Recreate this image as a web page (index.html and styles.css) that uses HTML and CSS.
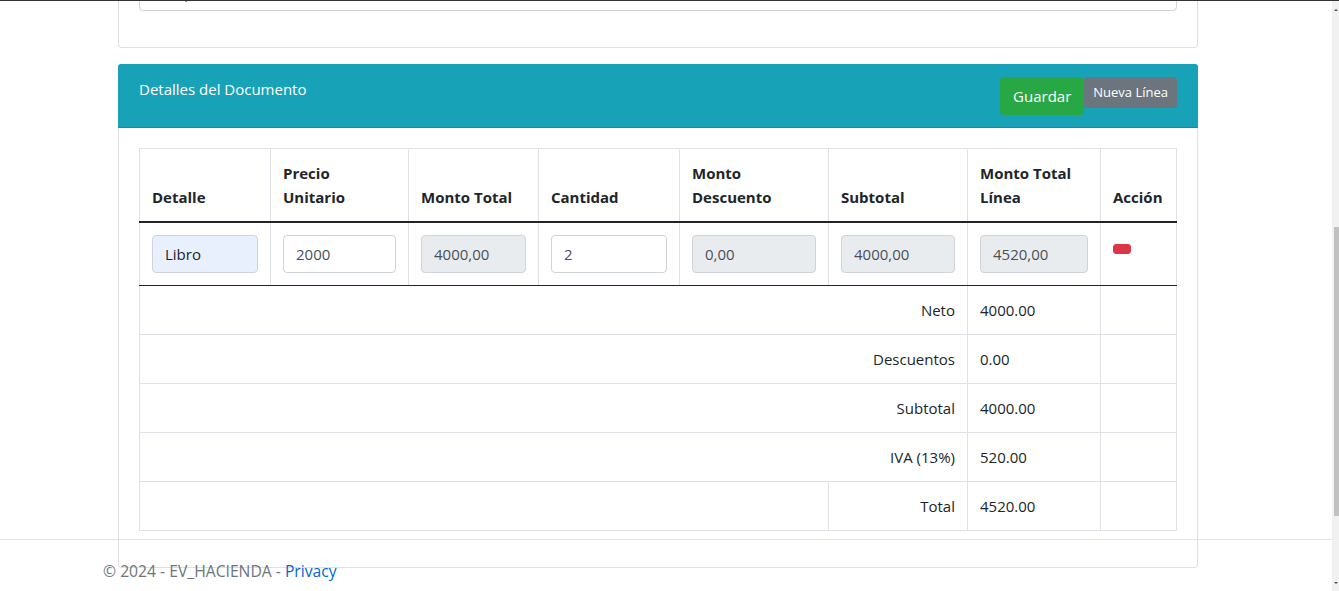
FILE: index.html
```html
<!DOCTYPE html>
<html lang="es">
<head>
<meta charset="utf-8">
<title>Detalles del Documento</title>
<link rel="stylesheet" href="styles.css">
</head>
<body>
<div class="topline"></div>
<main class="page">
  <section class="card card-first">
    <div class="card-body">
      <input class="form-control" type="text" value="Compra de libros">
    </div>
  </section>

  <section class="card card-detail">
    <header class="card-header">
      <span class="card-title">Detalles del Documento</span>
      <div class="btn-group"><button class="btn btn-success" type="button">Guardar</button><button class="btn btn-secondary btn-sm" type="button">Nueva Línea</button></div>
    </header>
    <div class="card-body">
      <table class="table">
        <colgroup>
          <col class="c-detalle">
          <col class="c-precio">
          <col class="c-monto">
          <col class="c-cant">
          <col class="c-desc">
          <col class="c-sub">
          <col class="c-linea">
          <col class="c-accion">
        </colgroup>
        <thead>
          <tr>
            <th>Detalle</th>
            <th>Precio<br>Unitario</th>
            <th>Monto Total</th>
            <th>Cantidad</th>
            <th>Monto<br>Descuento</th>
            <th>Subtotal</th>
            <th>Monto Total<br>Línea</th>
            <th>Acción</th>
          </tr>
        </thead>
        <tbody>
          <tr class="line-row">
            <td><input class="form-control autofill" type="text" value="Libro"></td>
            <td><input class="form-control" type="text" value="2000"></td>
            <td><input class="form-control" type="text" value="4000,00" readonly></td>
            <td><input class="form-control" type="text" value="2"></td>
            <td><input class="form-control" type="text" value="0,00" readonly></td>
            <td><input class="form-control" type="text" value="4000,00" readonly></td>
            <td><input class="form-control" type="text" value="4520,00" readonly></td>
            <td><button class="btn-delete" type="button" aria-label="Eliminar línea"></button></td>
          </tr>
        </tbody>
        <tfoot>
          <tr>
            <td colspan="6" class="label">Neto</td>
            <td>4000.00</td>
            <td></td>
          </tr>
          <tr>
            <td colspan="6" class="label">Descuentos</td>
            <td>0.00</td>
            <td></td>
          </tr>
          <tr>
            <td colspan="6" class="label">Subtotal</td>
            <td>4000.00</td>
            <td></td>
          </tr>
          <tr>
            <td colspan="6" class="label">IVA (13%)</td>
            <td>520.00</td>
            <td></td>
          </tr>
          <tr>
            <td colspan="5"></td>
            <td class="label">Total</td>
            <td>4520.00</td>
            <td></td>
          </tr>
        </tfoot>
      </table>
    </div>
  </section>
</main>

<footer class="footer">
  <div class="footer-inner">© 2024 - EV_HACIENDA - <a href="#" class="footer-link">Privacy</a></div>
</footer>

<div class="scrollbar" aria-hidden="true">
  <div class="scroll-up"></div>
  <div class="scroll-thumb"></div>
  <div class="scroll-down"></div>
</div>
</body>
</html>
```

FILE: styles.css
```css
* {
  box-sizing: border-box;
}

html,
body {
  margin: 0;
  padding: 0;
  height: 100%;
  overflow: hidden;
  background: #fff;
}

body {
  font-family: "Open Sans", "Noto Sans", "DejaVu Sans", sans-serif;
  font-size: 15px;
  line-height: 24px;
  color: #212529;
  position: relative;
}

.topline {
  position: fixed;
  top: 0;
  left: 0;
  right: 0;
  height: 1px;
  background: #333;
  z-index: 10;
}

.page {
  width: 1080px;
  margin-left: 118px;
}

.card {
  border: 1px solid rgba(0, 0, 0, 0.125);
  border-radius: 4px;
  background: #fff;
}

.card-first {
  margin-top: -48px;
}

.card-detail {
  margin-top: 16px;
}

.card-body {
  padding: 20px;
}

.card-first .form-control {
  margin-bottom: 16px;
}

.card-header {
  display: flex;
  justify-content: space-between;
  align-items: flex-start;
  padding: 12px 20px;
  background: #17a2b8;
  border-bottom: 1px solid rgba(0, 0, 0, 0.125);
  border-radius: 3px 3px 0 0;
  margin: -1px -1px 0;
  border-top: 1px solid #17a2b8;
  border-left: 1px solid #17a2b8;
  border-right: 1px solid #17a2b8;
  color: #fff;
}

.card-title {
  display: block;
  line-height: 24px;
}

.btn-group {
  display: flex;
  align-items: flex-start;
}

.btn {
  font-family: inherit;
  border: 1px solid transparent;
  color: #fff;
  border-radius: 4px;
  cursor: pointer;
}

.btn-success {
  background: #28a745;
  border-color: #28a745;
  font-size: 15px;
  line-height: 24px;
  padding: 6px 12px;
  height: 38px;
}

.btn-secondary {
  background: #6c757d;
  border-color: #6c757d;
}

.btn-sm {
  font-size: 13px;
  line-height: 21px;
  padding: 4px 8px;
  height: 31px;
  border-radius: 3px;
}

.form-control {
  display: block;
  width: 100%;
  height: 38px;
  padding: 6px 12px;
  font-family: inherit;
  font-size: 15px;
  line-height: 24px;
  color: #495057;
  background: #fff;
  border: 1px solid #ced4da;
  border-radius: 4px;
}

.form-control[readonly] {
  background: #e9ecef;
}

.form-control.autofill {
  background: #e8f0fe;
  color: #212529;
}

.table {
  width: 1037px;
  table-layout: fixed;
  border-collapse: collapse;
  margin-bottom: 16px;
  color: #212529;
}

.c-detalle { width: 131px; }
.c-precio { width: 138px; }
.c-monto { width: 130px; }
.c-cant { width: 141px; }
.c-desc { width: 149px; }
.c-sub { width: 139px; }
.c-linea { width: 133px; }
.c-accion { width: 76px; }

.table th,
.table td {
  border: 1px solid #dee2e6;
  padding: 12px;
  line-height: 24px;
  text-align: left;
}

.table th {
  font-weight: 700;
  vertical-align: bottom;
}

.table thead th {
  border-bottom: 2px solid #212529;
}

.table tbody td {
  vertical-align: top;
}

.table .line-row td {
  border-bottom: 1px solid #212529;
}

.table tfoot td.label {
  text-align: right;
}

.btn-delete {
  display: block;
  margin-top: 9px;
  width: 18px;
  height: 10px;
  padding: 0;
  border: 1px solid #dc3545;
  background: #dc3545;
  border-radius: 3px;
  cursor: pointer;
}

.footer {
  position: absolute;
  top: 539px;
  left: 0;
  right: 7px;
  height: 60px;
  border-top: 1px solid #e5e5e5;
  font-size: 15.7px;
  line-height: 62px;
  white-space: nowrap;
  color: #6c757d;
}

.footer-inner {
  padding-left: 103px;
}

.footer-link {
  color: #0366d6;
  text-decoration: none;
}

.scrollbar {
  position: fixed;
  top: 1px;
  right: 0;
  bottom: 0;
  width: 7px;
  background: #f1f1f1;
  z-index: 5;
}

.scroll-thumb {
  position: absolute;
  top: 226px;
  left: 2px;
  right: 0;
  height: 289px;
  background: #c1c1c1;
}

.scroll-up,
.scroll-down {
  position: absolute;
  right: 1px;
  width: 0;
  height: 0;
  border-left: 2px solid transparent;
  border-right: 2px solid transparent;
}

.scroll-up {
  top: 8px;
  border-bottom: 2px solid #505050;
}

.scroll-down {
  bottom: 7px;
  border-top: 2px solid #505050;
}
```
